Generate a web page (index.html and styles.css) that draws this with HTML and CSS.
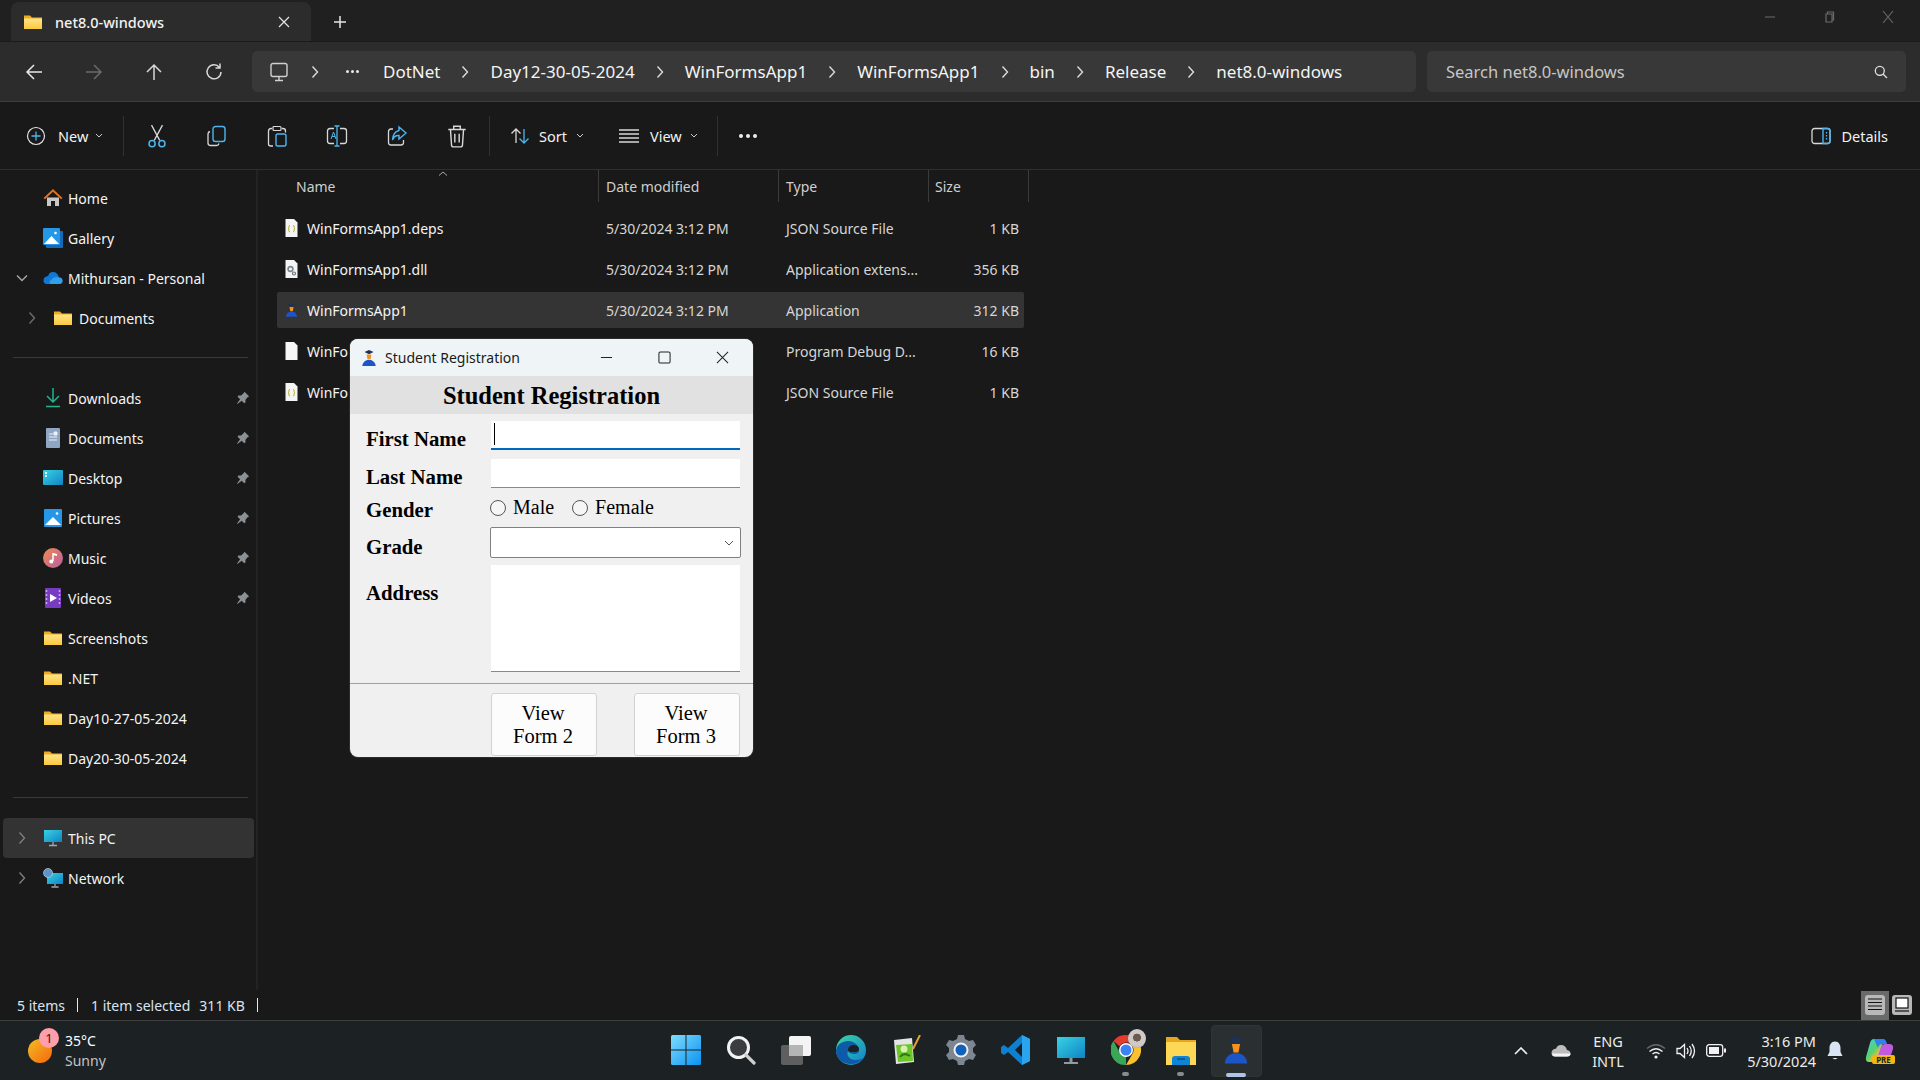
FILE: index.html
```html
<!DOCTYPE html>
<html lang="en">
<head>
<meta charset="utf-8">
<title>net8.0-windows - File Explorer</title>
<link rel="stylesheet" href="styles.css">
</head>
<body>
<svg class="defs" aria-hidden="true">
  <defs>
    <linearGradient id="gFolder" x1="0" y1="0" x2="0" y2="1"><stop offset="0" stop-color="#ffe48a"/><stop offset="1" stop-color="#fcc83c"/></linearGradient>
    <linearGradient id="gStart" x1="0" y1="0" x2="1" y2="1"><stop offset="0" stop-color="#7fdcff"/><stop offset="1" stop-color="#0a93f0"/></linearGradient>
    <linearGradient id="gSun" x1="0" y1="0" x2="1" y2="1"><stop offset="0" stop-color="#f3bb25"/><stop offset="1" stop-color="#f5680c"/></linearGradient>
    <linearGradient id="gMon" x1="0" y1="0" x2="1" y2="1"><stop offset="0" stop-color="#37d3e4"/><stop offset="1" stop-color="#1083c4"/></linearGradient>
    <linearGradient id="gEdge" x1="0" y1="0" x2="1" y2="1"><stop offset="0" stop-color="#3cd7a0"/><stop offset="1" stop-color="#0f7fd0"/></linearGradient>
    <linearGradient id="gMusic" x1="0" y1="0" x2="1" y2="1"><stop offset="0" stop-color="#ef8a4a"/><stop offset="1" stop-color="#b95fa8"/></linearGradient>
    <linearGradient id="gCop" x1="0" y1="0" x2="1" y2="1"><stop offset="0" stop-color="#3fd0f0"/><stop offset=".45" stop-color="#56d46c"/><stop offset=".7" stop-color="#f3b84a"/><stop offset="1" stop-color="#c05ae0"/></linearGradient>
    <symbol id="folder" viewBox="0 0 20 16"><path d="M1 1.500h6l2 2h10v11.500H1z" fill="#f0ac20"/><path d="M1 4.500h18v10.500H1z" fill="url(#gFolder)"/></symbol>
    <symbol id="student" viewBox="0 0 20 20"><path d="M10 1l5 2.400-5 2.400-5-2.400z" fill="#1c3258"/><path d="M7.300 6h5.400l-1 5.600H8.400z" fill="#f5921e"/><path d="M2.500 19c.3-4 3-6.200 5.500-6.800h4c2.500.6 5.200 2.800 5.500 6.800z" fill="#1c55c8"/></symbol>
    <symbol id="json" viewBox="0 0 14 20"><path d="M1 1h8.500L13 4.500V19H1z" fill="#f4f4f4"/><path d="M5.500 7.500q-1.200 0-1.200 1.200v1q0 .9-.8 1 .8.1.8 1v1q0 1.200 1.200 1.200M8.500 7.500q1.200 0 1.200 1.200v1q0 .9.8 1-.8.1-.8 1v1q0 1.200-1.200 1.200" fill="none" stroke="#b5a92a" stroke-width="1"/></symbol>
    <symbol id="dll" viewBox="0 0 14 20"><path d="M1 1h8.500L13 4.500V19H1z" fill="#f4f4f4"/><circle cx="6" cy="10" r="2.400" fill="none" stroke="#7a8794" stroke-width="1.600"/><circle cx="9.500" cy="14.500" r="1.500" fill="none" stroke="#68747f" stroke-width="1.200"/></symbol>
    <symbol id="blank" viewBox="0 0 14 20"><path d="M1 1h8.500L13 4.500V19H1z" fill="#f7f7f7"/></symbol>
    <symbol id="pin" viewBox="0 0 14 14"><path d="M8.500.8l4.700 4.700-1.400.6-2.300 2.700-.1 2.800-1.200.7-2.500-2.500L1.300 13 .9 12.700l3.200-4.500L1.600 5.700l.7-1.200 2.800-.1 2.700-2.300z" fill="#8a9094"/></symbol>
    <symbol id="chev" viewBox="0 0 8 14"><path d="M1.500 1.500L6.500 7l-5 5.500" fill="none" stroke="currentColor" stroke-width="1.400"/></symbol>
  </defs>
</svg>

<div class="app">
  <header class="tabstrip">
    <div class="tab">
      <svg class="i18"><use href="#folder"/></svg>
      <span class="tab-title">net8.0-windows</span>
      <svg class="tab-x" viewBox="0 0 12 12"><path d="M1 1l10 10M11 1L1 11" stroke="#e6e6e6" stroke-width="1.200"/></svg>
    </div>
    <svg class="tab-plus" viewBox="0 0 14 14"><path d="M7 1v12M1 7h12" stroke="#e6e6e6" stroke-width="1.500"/></svg>
    <div class="winctl">
      <svg viewBox="0 0 14 14"><path d="M2 7h10" stroke="#5f5f5f" stroke-width="1.200"/></svg>
      <svg viewBox="0 0 14 14"><path d="M4 4h6v8H4zM5.500 4V2h6v8H10" fill="none" stroke="#6a6a6a" stroke-width="1.200"/></svg>
      <svg viewBox="0 0 14 14"><path d="M2 1l10 12M12 1L2 13" stroke="#6a6a6a" stroke-width="1.100"/></svg>
    </div>
  </header>

  <nav class="navrow">
    <div class="navbtn"><svg class="i20" viewBox="0 0 20 20"><path d="M18 10H3M10 3l-7 7 7 7" fill="none" stroke="#e8e8e8" stroke-width="1.500"/></svg></div>
    <div class="navbtn"><svg class="i20" viewBox="0 0 20 20"><path d="M2 10h15M10 3l7 7-7 7" fill="none" stroke="#6a6a6a" stroke-width="1.500"/></svg></div>
    <div class="navbtn"><svg class="i20" viewBox="0 0 20 20"><path d="M10 18V3M3 10l7-7 7 7" fill="none" stroke="#d8d8d8" stroke-width="1.500"/></svg></div>
    <div class="navbtn"><svg class="i20" viewBox="0 0 20 20"><path d="M15.500 5.500A7 7 0 1 0 17 10M16 1.500v4.500h-4.500" fill="none" stroke="#d8d8d8" stroke-width="1.500"/></svg></div>
    <div class="address">
      <svg class="addr-pc" viewBox="0 0 20 20"><rect x="2" y="1.500" width="16" height="13" rx="2" fill="none" stroke="#d0d0d0" stroke-width="1.400"/><path d="M10 15v3M6 18.500h8" stroke="#d0d0d0" stroke-width="1.400"/></svg>
      <svg class="crumb-chev crumb-chev-first"><use href="#chev"/></svg>
      <div class="crumb-dots"><b></b><b></b><b></b></div>
      <span class="crumb">DotNet</span><svg class="crumb-chev"><use href="#chev"/></svg>
      <span class="crumb">Day12-30-05-2024</span><svg class="crumb-chev"><use href="#chev"/></svg>
      <span class="crumb">WinFormsApp1</span><svg class="crumb-chev"><use href="#chev"/></svg>
      <span class="crumb">WinFormsApp1</span><svg class="crumb-chev"><use href="#chev"/></svg>
      <span class="crumb">bin</span><svg class="crumb-chev"><use href="#chev"/></svg>
      <span class="crumb">Release</span><svg class="crumb-chev"><use href="#chev"/></svg>
      <span class="crumb">net8.0-windows</span>
    </div>
    <div class="search">
      <span>Search net8.0-windows</span>
      <svg class="i14" viewBox="0 0 14 14"><circle cx="5.800" cy="5.800" r="4.500" fill="none" stroke="#e0e0e0" stroke-width="1.300"/><path d="M9 9l4 4" stroke="#e0e0e0" stroke-width="1.300"/></svg>
    </div>
  </nav>

  <div class="toolbar">
    <div class="tb-new">
      <svg class="i20" viewBox="0 0 20 20"><circle cx="10" cy="10" r="8.500" fill="none" stroke="#e4e4e4" stroke-width="1.200"/><path d="M10 5.500v9M5.500 10h9" stroke="#4db5ee" stroke-width="1.300"/></svg>
      <span class="tb-label">New</span>
      <svg class="tb-caret" viewBox="0 0 8 5"><path d="M1 1l3 3 3-3" fill="none" stroke="#ccc"/></svg>
    </div>
    <i class="tb-sep"></i>
    <div class="tb-icon"><svg class="i22" viewBox="0 0 20 22"><path d="M5 1l7.500 14M15 1L7.500 15" stroke="#d8d8d8" stroke-width="1.200" fill="none"/><circle cx="5.500" cy="18" r="2.800" fill="none" stroke="#4db5ee" stroke-width="1.400"/><circle cx="14.500" cy="18" r="2.800" fill="none" stroke="#4db5ee" stroke-width="1.400"/></svg></div>
    <div class="tb-icon"><svg class="i22" viewBox="0 0 22 22"><path d="M4 6.500Q2 7 2 9v9q0 2.500 2.500 2.500h6q2 0 2.500-2" fill="none" stroke="#d8d8d8" stroke-width="1.300"/><rect x="7" y="1.500" width="12" height="15" rx="2.500" fill="none" stroke="#4db5ee" stroke-width="1.400"/></svg></div>
    <div class="tb-icon"><svg class="i22" viewBox="0 0 22 22"><path d="M6 3.500H5Q2.500 3.500 2.500 6v13Q2.500 21 5 21h2M16 3.500h1q2.500 0 2.500 2.500v1.500" fill="none" stroke="#d8d8d8" stroke-width="1.300"/><rect x="7" y="1.500" width="8" height="4" rx="1" fill="none" stroke="#d8d8d8" stroke-width="1.200"/><rect x="10" y="9" width="10" height="12" rx="1.800" fill="none" stroke="#4db5ee" stroke-width="1.400"/></svg></div>
    <div class="tb-icon"><svg class="i22" viewBox="0 0 22 22"><path d="M8 3.500H4Q1.500 3.500 1.500 6v10Q1.500 18.500 4 18.500h4M14 3.500h4q2.500 0 2.500 2.500v10q0 2.500-2.500 2.500h-4" fill="none" stroke="#d8d8d8" stroke-width="1.300"/><path d="M8.500 1h5M8.500 21h5M11 1v20" stroke="#4db5ee" stroke-width="1.300" fill="none"/><path d="M5 14l2.500-7 2.500 7M6 11.500h3" stroke="#4db5ee" stroke-width="1" fill="none"/></svg></div>
    <div class="tb-icon"><svg class="i22" viewBox="0 0 22 22"><path d="M7 4H5Q2.500 4 2.500 6.500v11Q2.500 20 5 20h10q2.500 0 2.500-2.500V15" fill="none" stroke="#d8d8d8" stroke-width="1.300"/><path d="M13 2l7 6-7 6v-3.500Q8.500 10 6.500 15 7 7 13 5.500z" fill="none" stroke="#4db5ee" stroke-width="1.400"/></svg></div>
    <div class="tb-icon"><svg class="i22" viewBox="0 0 20 22"><path d="M2 5h16M7 4.500V2h6v2.500M4 5l1 14.500Q5 21 7 21h6q2 0 2-1.500L16 5M8 9v8M12 9v8" fill="none" stroke="#d8d8d8" stroke-width="1.300"/></svg></div>
    <i class="tb-sep tb-sep-gap"></i>
    <div class="tb-menu">
      <svg class="i20" viewBox="0 0 20 20"><path d="M6 17V3M1.500 7.500L6 3l4.500 4.500" fill="none" stroke="#d8d8d8" stroke-width="1.300"/><path d="M14 3v14M9.500 12.500L14 17l4.500-4.500" fill="none" stroke="#4db5ee" stroke-width="1.300"/></svg>
      <span class="tb-label">Sort</span>
      <svg class="tb-caret" viewBox="0 0 8 5"><path d="M1 1l3 3 3-3" fill="none" stroke="#ccc"/></svg>
    </div>
    <div class="tb-menu tb-view">
      <svg class="i20" viewBox="0 0 20 20"><path d="M0 4h20M0 8h20M0 12h20M0 16h20" stroke="#d8d8d8" stroke-width="1.300"/></svg>
      <span class="tb-label">View</span>
      <svg class="tb-caret" viewBox="0 0 8 5"><path d="M1 1l3 3 3-3" fill="none" stroke="#ccc"/></svg>
    </div>
    <i class="tb-sep"></i>
    <div class="tb-more"><b></b><b></b><b></b></div>
    <div class="tb-details">
      <svg class="i20" viewBox="0 0 20 18"><rect x="1" y="1.500" width="18" height="15" rx="2.500" fill="none" stroke="#d8d8d8" stroke-width="1.300"/><path d="M12 1.500h4.500q2.500 0 2.500 2.500v10q0 2.500-2.500 2.500H12z" fill="none" stroke="#4db5ee" stroke-width="1.400"/><path d="M15.500 5v8" stroke="#4db5ee" stroke-width="1.300" stroke-dasharray="1.500 1.500"/></svg>
      <span class="tb-label">Details</span>
    </div>
  </div>

  <main class="main">
    <aside class="sidebar">
      <div class="side-row">
        <svg class="side-ic" viewBox="0 0 20 20"><path d="M4 9.500h12V18h-4v-5H8v5H4z" fill="#c8c8c8"/><path d="M0.500 10L10 1l9.500 9-1.500 1.200L10 3.800 2 11.200z" fill="#e2701c"/></svg>
        <span>Home</span>
      </div>
      <div class="side-row">
        <svg class="side-ic" viewBox="0 0 20 20"><rect x="3" y="3" width="17" height="17" rx="1" fill="#1769b8"/><rect x="0" y="0" width="17" height="17" rx="1" fill="#2497e8"/><path d="M1 16l7.500-8 7.500 8z" fill="#fff"/><circle cx="12.500" cy="5" r="1.300" fill="#fff"/></svg>
        <span>Gallery</span>
      </div>
      <div class="side-row">
        <svg class="side-exp" viewBox="0 0 12 8"><path d="M1 1.500l5 5 5-5" fill="none" stroke="#a8a8a8" stroke-width="1.400"/></svg>
        <svg class="side-ic" viewBox="0 0 20 14"><path d="M4 13h12q3.500 0 3.500-3.200T16 6.500Q14.500 1 10 1 6 1 5.200 5 .5 5.500.5 9.500 .5 13 4 13z" fill="#0f78d4"/><path d="M7 13h9q3.500 0 3.500-3.200T16 6.500Q11 5 8 9q-2 1-1 4z" fill="#2fa0ea"/></svg>
        <span>Mithursan - Personal</span>
      </div>
      <div class="side-row side-sub">
        <svg class="side-chev"><use href="#chev"/></svg>
        <svg class="side-ic"><use href="#folder"/></svg>
        <span>Documents</span>
      </div>
      <hr class="side-div">
      <div class="side-row">
        <svg class="side-ic" viewBox="0 0 20 20"><path d="M10 0v13M4 8l6 6 6-6M3 18.500h14" fill="none" stroke="#22b48e" stroke-width="1.500"/></svg>
        <span>Downloads</span><svg class="pin"><use href="#pin"/></svg>
      </div>
      <div class="side-row">
        <svg class="side-ic" viewBox="0 0 20 20"><rect x="3" y="0" width="14" height="20" rx="1" fill="#8ea6c2"/><path d="M6 6h4M6 9h8M6 12h8M11 4h3v3h-3z" stroke="#eef" fill="#eef"/></svg>
        <span>Documents</span><svg class="pin"><use href="#pin"/></svg>
      </div>
      <div class="side-row">
        <svg class="side-ic" viewBox="0 0 20 16"><rect width="20" height="15" rx="1" fill="url(#gMon)"/><path d="M2 2h2v2H2zM2 5h2v2H2z" fill="#eaffff"/></svg>
        <span>Desktop</span><svg class="pin"><use href="#pin"/></svg>
      </div>
      <div class="side-row">
        <svg class="side-ic" viewBox="0 0 20 20"><rect x="1" y="1" width="18" height="18" rx="1" fill="#2497e8"/><path d="M2 17l8-8 8 8z" fill="#fff"/><circle cx="14" cy="5.500" r="1.300" fill="#fff"/></svg>
        <span>Pictures</span><svg class="pin"><use href="#pin"/></svg>
      </div>
      <div class="side-row">
        <svg class="side-ic" viewBox="0 0 20 20"><circle cx="10" cy="10" r="10" fill="url(#gMusic)"/><path d="M10 5v8" stroke="#fff" stroke-width="1.500"/><path d="M10 5l4 1v2l-4-1z" fill="#fff"/><circle cx="8.300" cy="13.500" r="2" fill="#fff"/></svg>
        <span>Music</span><svg class="pin"><use href="#pin"/></svg>
      </div>
      <div class="side-row">
        <svg class="side-ic" viewBox="0 0 20 20"><rect x="2" y="0" width="16" height="20" rx="1" fill="#7a3bc4"/><path d="M7 6l7 4-7 4z" fill="#fff"/><path d="M3.500 2v16M16.500 2v16" stroke="#c8a8f0" stroke-width="1.500" stroke-dasharray="2 2"/></svg>
        <span>Videos</span><svg class="pin"><use href="#pin"/></svg>
      </div>
      <div class="side-row"><svg class="side-ic"><use href="#folder"/></svg><span>Screenshots</span></div>
      <div class="side-row"><svg class="side-ic"><use href="#folder"/></svg><span>.NET</span></div>
      <div class="side-row"><svg class="side-ic"><use href="#folder"/></svg><span>Day10-27-05-2024</span></div>
      <div class="side-row"><svg class="side-ic"><use href="#folder"/></svg><span>Day20-30-05-2024</span></div>
      <hr class="side-div">
      <div class="side-row side-active">
        <svg class="side-chev side-chev-top"><use href="#chev"/></svg>
        <svg class="side-ic" viewBox="0 0 20 18"><rect x="1" y="1" width="18" height="12" fill="url(#gMon)"/><path d="M10 13v3M6 16.500h8" stroke="#9ab" stroke-width="1.300"/></svg>
        <span>This PC</span>
      </div>
      <div class="side-row">
        <svg class="side-chev side-chev-top"><use href="#chev"/></svg>
        <svg class="side-ic" viewBox="0 0 20 20"><rect x="4" y="5" width="16" height="11" fill="url(#gMon)"/><path d="M12 16v2M8.500 19h7" stroke="#9ab" stroke-width="1.300"/><circle cx="5" cy="5" r="4.500" fill="#5c93c8" stroke="#cde" stroke-width=".6"/></svg>
        <span>Network</span>
      </div>
    </aside>

    <section class="files">
      <div class="file-head">
        <span class="col-name">Name</span>
        <span class="col-date">Date modified</span>
        <span class="col-type">Type</span>
        <span class="col-size">Size</span>
        <svg class="sort-caret" viewBox="0 0 10 5"><path d="M1 4.500L5 1l4 3.500" fill="none" stroke="#a8a8a8"/></svg>
      </div>
      <div class="file-row">
        <span class="col-name"><svg class="file-ic"><use href="#json"/></svg>WinFormsApp1.deps</span>
        <span class="col-date">5/30/2024 3:12 PM</span><span class="col-type">JSON Source File</span><span class="col-size">1 KB</span>
      </div>
      <div class="file-row">
        <span class="col-name"><svg class="file-ic"><use href="#dll"/></svg>WinFormsApp1.dll</span>
        <span class="col-date">5/30/2024 3:12 PM</span><span class="col-type">Application extens...</span><span class="col-size">356 KB</span>
      </div>
      <div class="file-row file-sel">
        <span class="col-name"><svg class="file-ic"><use href="#student"/></svg>WinFormsApp1</span>
        <span class="col-date">5/30/2024 3:12 PM</span><span class="col-type">Application</span><span class="col-size">312 KB</span>
      </div>
      <div class="file-row">
        <span class="col-name col-under"><svg class="file-ic"><use href="#blank"/></svg>WinFo</span>
        <span class="col-date"></span><span class="col-type">Program Debug D...</span><span class="col-size">16 KB</span>
      </div>
      <div class="file-row">
        <span class="col-name col-under"><svg class="file-ic"><use href="#json"/></svg>WinFo</span>
        <span class="col-date"></span><span class="col-type">JSON Source File</span><span class="col-size">1 KB</span>
      </div>
    </section>
  </main>

  <div class="statusbar">
    <span class="st-items">5 items</span><i class="st-bar"></i>
    <span class="st-sel">1 item selected</span><span class="st-size">311 KB</span><i class="st-bar"></i>
    <div class="st-views">
      <div class="view-a"><span class="view-inner"><svg viewBox="0 0 16 16"><path d="M1 2h14M1 5.500h14M1 9h14M1 12.500h14" stroke="#111" stroke-width="1.200"/></svg></span></div>
      <span class="view-inner view-b"><svg viewBox="0 0 16 16"><rect x="2" y="1" width="12" height="10" fill="#fff" stroke="#111" stroke-width="1.200"/><path d="M1 14h14" stroke="#111" stroke-width="1.200"/></svg></span>
    </div>
  </div>

  <footer class="taskbar">
    <div class="weather">
      <div class="sun"><svg viewBox="0 0 24 24"><circle cx="12" cy="12" r="12" fill="url(#gSun)"/></svg><span class="sun-badge">1</span></div>
      <div class="weather-text"><span>35°C</span><span class="dim">Sunny</span></div>
    </div>
    <div class="task-icons">
      <div class="task"><svg viewBox="0 0 30 30"><path d="M0 1.500Q0 0 1.500 0H14.500V14.500H0zM15.500 0H28.500Q30 0 30 1.500V14.500H15.500zM0 15.500H14.500V30H1.500Q0 30 0 28.500zM15.500 15.500H30V28.500Q30 30 28.500 30H15.500z" fill="url(#gStart)"/></svg></div>
      <div class="task"><svg viewBox="0 0 30 30"><circle cx="12.500" cy="12.500" r="10" fill="#3a3d40" stroke="#f2f2f2" stroke-width="3"/><path d="M20 20l8 8" stroke="#cfcfcf" stroke-width="3.200" stroke-linecap="round"/></svg></div>
      <div class="task"><svg viewBox="0 0 30 30"><rect x="0" y="10" width="22" height="20" rx="2" fill="#5f5f5f"/><rect x="8" y="1" width="22" height="20" rx="2" fill="#f4f4f4"/><rect x="8" y="10" width="14" height="11" fill="#b5b5b5"/></svg></div>
      <div class="task"><svg viewBox="0 0 30 30"><circle cx="15" cy="15" r="15" fill="url(#gEdge)"/><path d="M0 16C1 6 14 3 20 9c3 3 4 7 2 9-3 2-9 1-10-2-2 4 1 9 8 9 3 0 5-1 7-2-3 4-7 6-12 6C7 29 0 24 0 16z" fill="#0d5aa8"/><path d="M12 15c0-3 3-5 6-5s5 2 5 4c0 3-3 3-5 3-3 0-6 0-6-2z" fill="#1c2022"/></svg></div>
      <div class="task"><svg viewBox="0 0 30 30"><path d="M3 5l18-2 2 24-18 2z" fill="#e4e4e4"/><path d="M5 10l16-1 1 17-15 1z" fill="#6cc62a"/><circle cx="13" cy="14" r="3.500" fill="#d7efb0"/><path d="M9 22c3-4 7-3 10-1" stroke="#2d7a12" stroke-width="2" fill="none"/><path d="M29 0l-7 14" stroke="#e8a030" stroke-width="2"/></svg></div>
      <div class="task"><svg viewBox="0 0 30 30"><path d="M12 0h6l1 4 4 2 4-1 3 5-3 3v4l3 3-3 5-4-1-4 2-1 4h-6l-1-4-4-2-4 1-3-5 3-3v-4L0 10l3-5 4 1 4-2z" fill="#7d8590"/><circle cx="15" cy="15" r="7.500" fill="#f0f0f0"/><circle cx="15" cy="15" r="5.500" fill="#0f62b8"/></svg></div>
      <div class="task"><svg viewBox="0 0 30 30"><path d="M21 0l8 4v22l-8 4L7 17l-4 3-3-2v-6l3-2 4 3z" fill="#0f7fd0"/><path d="M21 0l8 4v22l-8 4z" fill="#2aa4ee"/><path d="M21 8l-7 7 7 7z" fill="#1c2022"/></svg></div>
      <div class="task"><svg viewBox="0 0 30 30"><rect x="1" y="2" width="28" height="21" fill="url(#gMon)"/><path d="M15 23v4" stroke="#8f99a2" stroke-width="3"/><path d="M8 28h14" stroke="#8f99a2" stroke-width="2"/></svg></div>
      <div class="task task-run">
        <svg viewBox="0 0 30 30"><path d="M15 0a15 15 0 0 1 13 7.500H15a7.500 7.500 0 0 0-6.500 3.800L2.500 6A15 15 0 0 1 15 0z" fill="#e33b2e"/><path d="M28 7.500A15 15 0 0 1 15 30l6.500-11.200a7.500 7.500 0 0 0 0-7.500z" fill="#fbc02d"/><path d="M15 30A15 15 0 0 1 2.500 6l6 11.300a7.500 7.500 0 0 0 6.500 3.700z" fill="#3aa757"/><circle cx="15" cy="15" r="7" fill="#fff"/><circle cx="15" cy="15" r="5.500" fill="#3b82f6"/></svg>
        <span class="avatar"></span>
      </div>
      <div class="task task-run"><svg viewBox="0 0 30 30"><path d="M0 2h11l3 3h16v25H0z" fill="#eaa51e"/><path d="M0 7h30v23H0z" fill="#fdd756"/><path d="M6 24q0-3 3-3h12q3 0 3 3v6H6z" fill="#0f84d6"/><path d="M11 24h8" stroke="#0b4f8a" stroke-width="1.500"/></svg></div>
      <div class="task task-active"><svg viewBox="0 0 30 30"><use href="#student"/></svg></div>
    </div>
    <div class="tray">
      <svg class="tray-up" viewBox="0 0 14 8"><path d="M1 7l6-6 6 6" fill="none" stroke="#f0f0f0" stroke-width="1.600"/></svg>
      <svg class="tray-cloud" viewBox="0 0 20 13"><path d="M4 12.500h12q3.500 0 3.500-3T16 6Q14.500 1 10 1 6 1 5.200 4.500 .5 5 .5 9 .5 12.500 4 12.500z" fill="#bdbdbd"/><path d="M4 12.500h12q3.500 0 3.500-3H1q.5 3 3 3z" fill="#f4f4f4"/></svg>
      <div class="tray-lang"><span>ENG</span><span>INTL</span></div>
      <svg class="tray-wifi" viewBox="0 0 20 16"><path d="M1 5.500Q10-2 19 5.500" fill="none" stroke="#666" stroke-width="1.400"/><path d="M3.500 8.500Q10 3 16.500 8.500M6.500 11q3.500-3 7 0" fill="none" stroke="#f2f2f2" stroke-width="1.400"/><circle cx="10" cy="14" r="1.600" fill="#f2f2f2"/></svg>
      <svg class="tray-vol" viewBox="0 0 20 16"><path d="M1 5.500h3L8.500 1.500v13L4 10.500H1z" fill="none" stroke="#f2f2f2" stroke-width="1.300"/><path d="M11 5q2 3 0 6M13.500 3q3.500 5 0 10M16 1q5 7 0 14" fill="none" stroke="#f2f2f2" stroke-width="1.300"/></svg>
      <svg class="tray-bat" viewBox="0 0 20 13"><rect x=".7" y=".7" width="16" height="11.600" rx="2.500" fill="none" stroke="#f2f2f2" stroke-width="1.300"/><rect x="3" y="3" width="10" height="7" fill="#f2f2f2"/><rect x="18" y="4.500" width="2" height="4" fill="#f2f2f2"/></svg>
      <div class="tray-clock"><span>3:16 PM</span><span>5/30/2024</span></div>
      <svg class="tray-bell" viewBox="0 0 16 20"><path d="M8 0.500C4 .5 2.500 4 2.500 7v4L.5 15h15l-2-4V7C13.500 4 12 .5 8 .5z" fill="#d8e4f4"/><path d="M5.500 17q2.500 2.500 5 0z" fill="#d8e4f4"/></svg>
      <div class="copilot"><svg viewBox="0 0 30 26"><path d="M9 1h10l-6 19Q12 24 7 24H4Q0 24 1 19L5 5Q6 1 9 1z" fill="url(#gCop)"/><path d="M20 6h4q5 0 4 5l-3 9q-1 4-5 4h-9l5-15q1-3 4-3z" fill="#c05ae0"/><path d="M9 1h9q3 0 4 5h-5q-3 0-4 4z" fill="#2f80f0"/></svg><span class="pre">PRE</span></div>
    </div>
  </footer>

  <div class="dialog">
    <div class="dlg-title">
      <svg class="dlg-ic"><use href="#student"/></svg>
      <span class="dlg-name">Student Registration</span>
      <svg class="dlg-btn" viewBox="0 0 14 14"><path d="M1 7h12" stroke="#222" stroke-width="1.100"/></svg>
      <svg class="dlg-btn" viewBox="0 0 14 14"><rect x="1" y="1" width="12" height="12" rx="1.500" fill="none" stroke="#222" stroke-width="1.100"/></svg>
      <svg class="dlg-btn" viewBox="0 0 14 14"><path d="M1 1l12 12M13 1L1 13" stroke="#222" stroke-width="1.100"/></svg>
    </div>
    <h1 class="dlg-head">Student Registration</h1>
    <div class="form">
      <label class="lbl lbl-first">First Name</label>
      <div class="input input-focus"><i class="caret"></i></div>
      <label class="lbl lbl-first">Last Name</label>
      <div class="input"></div>
      <label class="lbl lbl-gender">Gender</label>
      <div class="radios"><i class="radio"></i><span class="radio-text">Male</span><i class="radio radio-2"></i><span class="radio-text">Female</span></div>
      <label class="lbl lbl-grade">Grade</label>
      <div class="combo"><svg viewBox="0 0 10 6"><path d="M1 1l4 4 4-4" fill="none" stroke="#555"/></svg></div>
      <label class="lbl lbl-addr">Address</label>
      <div class="input area"></div>
    </div>
    <div class="dlg-foot">
      <div class="dlg-action">View<br>Form 2</div>
      <div class="dlg-action">View<br>Form 3</div>
    </div>
  </div>
</div>
</body>
</html>
```
FILE: styles.css
```css
* { box-sizing: border-box; }
html, body { margin: 0; height: 100%; background: #191919; overflow: hidden; }
body { font-family: "Noto Sans", "Open Sans", sans-serif; color: #fff; font-size: 14px; }
svg { display: block; flex: none; }
.defs { position: absolute; width: 0; height: 0; }
.i14 { width: 14px; height: 14px; }
.i18 { width: 20px; height: 18px; }
.i20 { width: 20px; height: 20px; }
.i22 { width: 22px; height: 24px; }

.app { position: relative; width: 1920px; height: 1080px; display: grid; grid-template-rows: 42px 60px 68px 820px 31px 59px; }

/* tabs */
.tabstrip { background: #202020; display: flex; align-items: flex-end; border-bottom: 1px solid #1a1a1a; }
.tab { margin-left: 11px; width: 300px; height: 39px; padding: 0 21px 0 12px; background: #2c2c2c; border-radius: 8px 8px 0 0; display: flex; align-items: center; gap: 12px; }
.tab-title { flex: 1; font-size: 14.500px; font-weight: 500; color: #f2f2f2; }
.tab-x { width: 12px; height: 12px; }
.tab-plus { width: 14px; height: 14px; margin: 0 0 12px 22px; }
.winctl { margin-left: auto; height: 42px; padding: 0 25px 6px 0; display: flex; align-items: center; gap: 45px; }
.winctl svg { width: 14px; height: 14px; }

/* nav */
.navrow { background: #2c2c2c; border-bottom: 1px solid #3d3d3d; padding: 9px 14px 9px 4px; display: flex; align-items: stretch; }
.navbtn { width: 60px; display: flex; align-items: center; justify-content: center; }
.address { margin-left: 8px; width: 1164px; background: #383838; border-radius: 5px; padding: 0 0 0 17px; display: flex; align-items: center; gap: 21px; font-size: 17px; white-space: nowrap; }
.addr-pc { width: 20px; height: 20px; }
.crumb-chev { width: 8px; height: 14px; color: #dcdcdc; }
.crumb-chev-first { margin-left: 1px; }
.crumb { color: #f4f4f4; }
.crumb-dots { display: flex; gap: 2px; margin: 0 3px 0 6px; }
.crumb-dots b { width: 3px; height: 3px; border-radius: 50%; background: #e8e8e8; }
.search { margin-left: 11px; flex: 1; background: #383838; border-radius: 5px; padding: 0 18px 0 19px; display: flex; align-items: center; justify-content: space-between; font-size: 16.500px; color: #c6c6c6; }

/* toolbar */
.toolbar { background: #191919; border-bottom: 1px solid #2f2f2f; padding-left: 26px; padding-right: 32px; display: flex; align-items: center; }
.tb-label { font-size: 14.500px; color: #f2f2f2; }
.tb-caret { width: 8px; height: 5px; }
.tb-new { width: 97px; display: flex; align-items: center; gap: 12px; }
.tb-new .tb-caret { margin-left: -5px; }
.tb-sep { width: 1px; height: 40px; background: #303030; }
.tb-sep-gap { margin-left: 2px; }
.tb-icon { width: 60px; display: flex; justify-content: center; }
.tb-sep + .tb-icon { margin-left: 3px; }
.tb-menu { width: 110px; padding-left: 20px; display: flex; align-items: center; gap: 9px; }
.tb-view { width: 117px; padding-left: 19px; gap: 11px; }
.tb-view .tb-caret { margin-left: -3px; }
.tb-more { margin-left: 21px; display: flex; gap: 3px; }
.tb-more b { width: 4px; height: 4px; border-radius: 50%; background: #eee; }
.tb-details { margin-left: auto; display: flex; align-items: center; gap: 10px; }

/* main */
.main { display: flex; min-height: 0; background: #191919; }
.sidebar { width: 258px; padding-top: 8px; border-right: 2px solid #232323; font-size: 14px; color: #f4f4f4; }
.side-row { position: relative; height: 40px; padding-left: 43px; display: flex; align-items: center; gap: 5px; }
.side-sub { padding-left: 53px; gap: 6px; }
.side-ic { width: 20px; height: 20px; }
.side-exp { position: absolute; left: 16px; top: 16px; width: 12px; height: 8px; }
.side-chev { position: absolute; left: 28px; top: 13px; width: 8px; height: 14px; color: #6d6d6d; }
.side-chev-top { left: 18px; color: #7d7d7d; }
.side-active { background: #333; margin: 0 0 0 3px; padding-left: 40px; width: 251px; border-radius: 4px; }
.side-active .side-chev { left: 15px; }
.pin { position: absolute; left: 236px; top: 13px; width: 14px; height: 14px; }
.side-div { margin: 19px 8px 20px 13px; border: 0; height: 1px; background: #3a3a3a; }

.files { flex: 1; position: relative; padding-left: 19px; font-size: 14px; color: #d6d6d6; }
.file-head, .file-row { display: grid; grid-template-columns: 322px 180px 150px 100px; white-space: nowrap; align-items: center; }
.file-head { position: relative; width: 752px; height: 32px; color: #cfcfcf; margin-bottom: 8px; }
.file-head span { height: 100%; display: flex; align-items: center; border-right: 1px solid #3b3b3b; }
.file-head .col-name { padding-left: 19px; }
.file-head .col-date { padding-left: 7px; }
.file-head .col-type { padding-left: 7px; }
.file-head .col-size { padding-left: 6px; }
.sort-caret { position: absolute; left: 161px; top: 1px; width: 10px; height: 5px; }
.file-row { grid-template-columns: 322px 180px 150px 95px; width: 747px; height: 36px; margin-bottom: 5px; border-radius: 2px; }
.file-row .col-name { display: flex; align-items: center; gap: 8px; color: #f4f4f4; padding-left: 7px; overflow: hidden; }
.file-row .col-date { padding-left: 7px; }
.file-row .col-type { padding-left: 7px; overflow: hidden; }
.file-row .col-size { text-align: right; padding-right: 5px; }
.file-sel { background: #343434; }
.file-ic { width: 15px; height: 20px; }

/* status */
.statusbar { background: #191919; border-bottom: 1px solid #3e3e3e; padding-left: 17px; display: flex; align-items: center; font-size: 14px; color: #d8e4f0; }
.st-bar { width: 1px; height: 14px; background: #e8e8e8; margin: 0 13px 0 12px; }
.st-size { margin-left: 9px; }
.st-views { margin-left: auto; padding-right: 8px; display: flex; align-items: center; gap: 3px; height: 100%; }
.view-a { width: 28px; height: 29px; background: #6a6a6a; display: flex; align-items: center; justify-content: center; }
.view-inner { width: 20px; height: 20px; background: #b8b8b8; border-radius: 3px; display: flex; align-items: center; justify-content: center; }
.view-inner svg { width: 16px; height: 16px; }

/* taskbar */
.taskbar { background: #1c2124; display: grid; grid-template-columns: 658px 605px 1fr; align-items: center; }
.weather { padding-left: 28px; display: flex; align-items: center; gap: 13px; font-size: 14px; }
.sun { position: relative; width: 24px; height: 24px; }
.sun svg { width: 24px; height: 24px; }
.sun-badge { position: absolute; left: 11px; top: -11px; width: 20px; height: 20px; border-radius: 50%; background: #ff9dab; color: #222; font-size: 13px; line-height: 20px; text-align: center; }
.weather-text { display: flex; flex-direction: column; line-height: 20px; }
.dim { color: #c4c4c4; }
.task-icons { display: flex; height: 100%; }
.task { position: relative; width: 55px; height: 100%; padding-bottom: 1px; display: flex; align-items: center; justify-content: center; }
.task svg { width: 30px; height: 30px; }
.task-run::after { content: ""; position: absolute; left: 24px; bottom: 4px; width: 7px; height: 4px; border-radius: 2px; background: #8a8a8a; }
.task-active::before { content: ""; position: absolute; left: 3px; top: 4px; width: 49px; height: 50px; border-radius: 4px; background: #2a2f32; border: 1px solid #333; }
.task-active svg { position: relative; }
.task-active::after { content: ""; position: absolute; left: 18px; bottom: 3px; width: 20px; height: 4px; border-radius: 2px; background: #b0c4e8; }
.avatar { position: absolute; left: 30px; top: 8px; width: 18px; height: 19px; border-radius: 50%; background: radial-gradient(circle at 50% 45%, #6c5a50 0 28%, #cfcac6 30% 60%, #8d8a88 100%); }
.tray { display: flex; align-items: center; font-size: 14.500px; position: relative; height: 100%; }
.tray-up { width: 14px; height: 8px; margin-left: 251px; }
.tray-cloud { width: 20px; height: 13px; margin-left: 23px; }
.tray-lang { width: 40px; margin-left: 17px; display: flex; flex-direction: column; align-items: center; line-height: 20px; color: #ececec; }
.tray-wifi { width: 20px; height: 16px; margin-left: 18px; }
.tray-vol { width: 20px; height: 16px; margin-left: 10px; }
.tray-bat { width: 20px; height: 13px; margin-left: 10px; }
.tray-clock { width: 90px; display: flex; flex-direction: column; align-items: flex-end; line-height: 20px; color: #ececec; }
.tray-bell { width: 16px; height: 20px; margin-left: 11px; }
.copilot { position: relative; width: 30px; height: 26px; margin-left: 22px; }
.copilot svg { width: 30px; height: 26px; }
.pre { position: absolute; left: 7px; top: 17px; width: 23px; height: 9px; border-radius: 2px; background: #f0b810; color: #222; font-size: 8px; font-weight: 700; line-height: 9px; text-align: center; }

/* dialog */
.dialog { position: absolute; left: 350px; top: 339px; width: 403px; height: 418px; background: #f0f0f0; border-radius: 8px; overflow: hidden; color: #000; font-family: "Liberation Serif", serif; box-shadow: 0 0 0 1px #2c2c2c; display: flex; flex-direction: column; }
.dlg-title { height: 37px; flex: none; padding: 0 24px 0 10px; background: #eff5f7; display: flex; align-items: center; font-family: "Noto Sans", sans-serif; font-size: 14px; color: #1a1a1a; }
.dlg-ic { width: 18px; height: 18px; }
.dlg-name { margin-left: 7px; flex: 1; }
.dlg-btn { width: 13px; height: 13px; margin-left: 45px; }
.dlg-head { margin: 0; height: 38px; flex: none; background: #e1e1e1; font-size: 24.500px; font-weight: 700; line-height: 40px; text-align: center; }
.form { padding: 7px 13px 0 16px; display: grid; grid-template-columns: 125px 1fr; grid-template-rows: 29px 29px 21px 31px 105px; row-gap: 9px; }
.lbl { font-size: 20.800px; font-weight: 700; line-height: 24px; height: 24px; }
.lbl-first { margin-top: 6px; }
.lbl-gender { margin-top: 1px; }
.lbl-grade { margin-top: 8px; }
.lbl-addr { margin-top: 14px; }
.input { background: #fff; border-bottom: 1px solid #888; position: relative; }
.input-focus { border-bottom: 2px solid #0067c0; }
.caret { position: absolute; left: 3px; top: 2px; width: 1px; height: 22px; background: #000; }
.area { margin-top: -2px; }
.radios { display: flex; align-items: center; margin-left: -1px; }
.radio { width: 16px; height: 16px; border: 1px solid #555; border-radius: 50%; background: #f6f6f6; }
.radio-2 { margin-left: 18px; }
.radio-text { margin-left: 7px; font-size: 20px; }
.combo { margin: 0 -1px; background: #fff; border: 1px solid #808080; border-radius: 2px; display: flex; align-items: center; justify-content: flex-end; padding-right: 6px; }
.combo svg { width: 10px; height: 6px; }
.dlg-foot { margin-top: 11px; flex: 1; border-top: 1px solid #a0a0a0; padding: 9px 13px 1px 0; display: flex; justify-content: flex-end; gap: 37px; }
.dlg-action { width: 106px; background: #fcfcfc; border: 1px solid #d2d2d2; border-radius: 3px; font-size: 20.500px; line-height: 23px; text-align: center; padding: 8px 2px 0 0; }
```
